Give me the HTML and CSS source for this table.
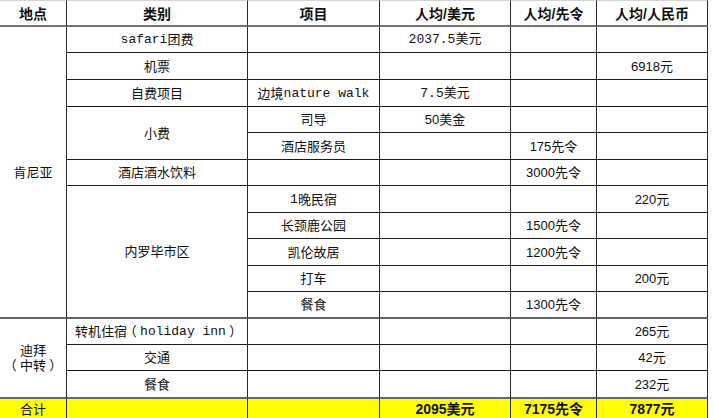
FILE: index.html
```html
<!DOCTYPE html>
<html lang="zh-CN">
<head>
<meta charset="utf-8">
<title>肯尼亚行程费用</title>
<link rel="stylesheet" href="styles.css">
</head>
<body>
<div class="sheet">
  <div class="c hd">地点</div>
  <div class="c hd">类别</div>
  <div class="c hd">项目</div>
  <div class="c hd">人均/美元</div>
  <div class="c hd">人均/先令</div>
  <div class="c hd">人均/人民币</div>

  <div class="c span11 thick">肯尼亚</div>
  <div class="c"><span class="mono">safari</span>团费</div>
  <div class="c"></div>
  <div class="c mono">2037.5美元</div>
  <div class="c"></div>
  <div class="c"></div>

  <div class="c">机票</div>
  <div class="c"></div>
  <div class="c"></div>
  <div class="c"></div>
  <div class="c">6918元</div>

  <div class="c">自费项目</div>
  <div class="c">边境<span class="mono">nature walk</span></div>
  <div class="c mono">7.5美元</div>
  <div class="c"></div>
  <div class="c"></div>

  <div class="c span2">小费</div>
  <div class="c">司导</div>
  <div class="c">50美金</div>
  <div class="c"></div>
  <div class="c"></div>

  <div class="c">酒店服务员</div>
  <div class="c"></div>
  <div class="c">175先令</div>
  <div class="c"></div>

  <div class="c">酒店酒水饮料</div>
  <div class="c"></div>
  <div class="c"></div>
  <div class="c">3000先令</div>
  <div class="c"></div>

  <div class="c span5 thick">内罗毕市区</div>
  <div class="c"><span class="mono">1</span>晚民宿</div>
  <div class="c"></div>
  <div class="c"></div>
  <div class="c">220元</div>

  <div class="c">长颈鹿公园</div>
  <div class="c"></div>
  <div class="c">1500先令</div>
  <div class="c"></div>

  <div class="c">凯伦故居</div>
  <div class="c"></div>
  <div class="c">1200先令</div>
  <div class="c"></div>

  <div class="c">打车</div>
  <div class="c"></div>
  <div class="c"></div>
  <div class="c">200元</div>

  <div class="c thick">餐食</div>
  <div class="c thick"></div>
  <div class="c thick">1300先令</div>
  <div class="c thick"></div>

  <div class="c span3 thick stack"><span>迪拜</span><span><span class="fw">（</span>中转<span class="fw">）</span></span></div>
  <div class="c">转机住宿<span class="fw">（</span><span class="mono">holiday inn</span><span class="fw">）</span></div>
  <div class="c"></div>
  <div class="c"></div>
  <div class="c"></div>
  <div class="c">265元</div>

  <div class="c">交通</div>
  <div class="c"></div>
  <div class="c"></div>
  <div class="c"></div>
  <div class="c">42元</div>

  <div class="c thick">餐食</div>
  <div class="c thick"></div>
  <div class="c thick"></div>
  <div class="c thick"></div>
  <div class="c thick">232元</div>

  <div class="c total">合计</div>
  <div class="c total"></div>
  <div class="c total"></div>
  <div class="c total sum">2095美元</div>
  <div class="c total sum">7175先令</div>
  <div class="c total sum">7877元</div>
</div>
</body>
</html>
```

FILE: styles.css
```css
html, body {
  margin: 0;
  padding: 0;
  overflow: hidden;
  background: #ffffff;
}

.sheet {
  display: grid;
  grid-template-columns: 67px 181px 132px 131px 86px 111px;
  grid-template-rows: 27px 26px 27px 27px 26px 27px 26px 27px 26px 27px 26px 27px 26px 26px 28px 26px;
  width: 708px;
  font-family: "Liberation Sans", "Noto Sans CJK SC", sans-serif;
  font-size: 13px;
  color: #111111;
}

.c {
  box-sizing: border-box;
  display: flex;
  align-items: center;
  justify-content: center;
  white-space: nowrap;
  border-right: 1px solid #2a2a2a;
  border-bottom: 1px solid #1c1c1c;
  line-height: 15px;
}

.mono {
  font-family: "Liberation Mono", "Noto Sans CJK SC", monospace;
}

.fw {
  display: inline-block;
  width: 1em;
  text-align: center;
  font-feature-settings: "halt" 1;
}

.hd {
  font-size: 14px;
  font-weight: bold;
  border-top: 1px solid #d4d4d4;
  border-bottom: 2px solid #747474;
  padding-top: 2px;
}

.thick {
  border-bottom: 2px solid #666666;
}

.span11 { grid-row: span 11; }
.span5 { grid-row: span 5; }
.span3 { grid-row: span 3; }
.span2 { grid-row: span 2; }

.stack {
  flex-direction: column;
}

.total {
  background: #ffff00;
  align-items: flex-start;
  padding-top: 3px;
}

.sum {
  font-weight: bold;
  font-size: 14px;
}
```
